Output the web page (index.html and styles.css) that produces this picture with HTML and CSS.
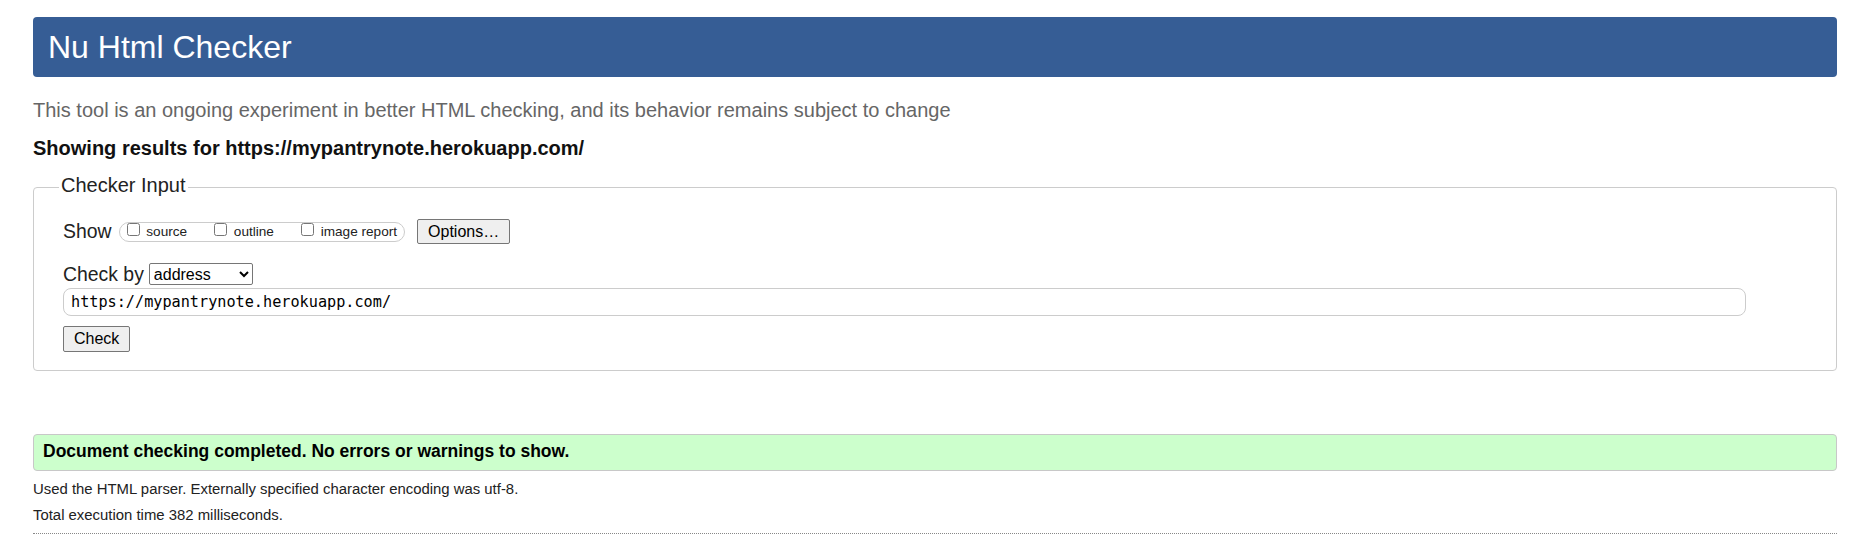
FILE: index.html
```html
<!DOCTYPE html>
<html lang="en">
<head>
<meta charset="utf-8">
<title>Showing results for https://mypantrynote.herokuapp.com/ - Nu Html Checker</title>
<link rel="stylesheet" href="styles.css">
</head>
<body>
<h1 class="title">Nu Html Checker</h1>
<p class="intro">This tool is an ongoing experiment in better HTML checking, and its behavior remains subject to change</p>
<p class="showing">Showing results for https://mypantrynote.herokuapp.com/</p>
<form class="checker">
<fieldset class="input-box">
<legend class="legend">Checker Input</legend>
<div class="row show-row">
<span class="row-label label-show">Show</span>
<span class="pill"><label class="opt"><input type="checkbox" class="cb"> source</label><label class="opt"><input type="checkbox" class="cb"> outline</label><label class="opt opt-last"><input type="checkbox" class="cb"> image report</label></span>
<button type="button" class="btn btn-options">Options…</button>
</div>
<div class="row by-row">
<span class="row-label">Check by</span>
<select class="by-select"><option>address</option></select>
</div>
<div class="url-row"><input class="url" type="url" value="https://mypantrynote.herokuapp.com/"></div>
<div class="submit-row"><button type="button" class="btn btn-check">Check</button></div>
</fieldset>
</form>
<p class="success">Document checking completed. No errors or warnings to show.</p>
<p class="details">Used the HTML parser. Externally specified character encoding was utf-8.</p>
<p class="details">Total execution time 382 milliseconds.</p>
<hr class="dots">
</body>
</html>
```

FILE: styles.css
```css
html, body {
  background: #ffffff;
}
body {
  margin: 0;
  padding: 17px 20px 0 33px;
  font-family: "Liberation Sans", Arial, sans-serif;
  color: #222222;
}
.title {
  margin: 0;
  height: 60px;
  line-height: 60px;
  padding: 0 15px;
  background: #365d95;
  color: #ffffff;
  font-size: 32px;
  font-weight: normal;
  border-radius: 4px;
}
.intro {
  margin: 21px 0 0;
  font-size: 20px;
  line-height: 24px;
  color: #666666;
}
.showing {
  margin: 15px 0 0;
  font-size: 20px;
  line-height: 22px;
  font-weight: bold;
  color: #111111;
}
.checker {
  margin: 0;
}
.input-box {
  margin: 16px 0 0;
  padding: 0 20px 18px 29px;
  border: 1px solid #cccccc;
  border-radius: 4px;
  min-width: 0;
}
.legend {
  font-size: 20px;
  line-height: 20px;
  padding: 0 2px 4px;
  margin-left: -4px;
  color: #222222;
}
.row {
  display: flex;
  align-items: center;
}
.show-row {
  margin-top: 20px;
  height: 25px;
}
.row-label {
  font-size: 19.4px;
  line-height: 22px;
}
.label-show {
  padding-bottom: 2px;
  margin-right: 7px;
}
.pill {
  display: inline-block;
  border: 1px solid #cccccc;
  border-radius: 10px;
  padding: 0 7px 1px 3px;
  font-size: 13.6px;
  line-height: 17px;
  white-space: nowrap;
}
.opt {
  margin-right: 23px;
}
.opt-last {
  margin-right: 0;
}
.cb {
  width: 13px;
  height: 13px;
  margin: 0 3px 3px 4px;
  vertical-align: baseline;
}
.btn {
  font-family: "Liberation Sans", Arial, sans-serif;
  font-size: 16px;
  color: #000000;
  background: #efefef;
  border: 1px solid #767676;
  border-radius: 2px;
  padding: 0 9px;
}
.btn-options {
  margin-left: 12px;
  height: 25px;
  padding: 0 10px;
}
.by-row {
  margin-top: 19px;
  height: 22px;
}
.by-row .row-label {
  margin-right: 5px;
}
.by-select {
  font-family: "Liberation Sans", Arial, sans-serif;
  font-size: 16px;
  width: 104px;
  height: 22px;
  color: #000000;
  border: 1px solid #767676;
  border-radius: 2px;
  background: #ffffff;
}
.url-row {
  margin-top: 3px;
}
.url {
  box-sizing: border-box;
  width: 96%;
  height: 28px;
  margin: 0;
  padding: 0 7px;
  border: 1px solid #cccccc;
  border-radius: 8px;
  font-family: "DejaVu Sans Mono", "Liberation Mono", monospace;
  font-size: 15.2px;
  color: #000000;
}
.submit-row {
  margin-top: 10px;
}
.btn-check {
  height: 26px;
  padding: 0 10px;
}
.success {
  margin: 63px 0 0;
  padding: 5px 9px 8px;
  line-height: 22px;
  font-size: 17.5px;
  font-weight: bold;
  color: #000000;
  background: #ccffcc;
  border: 1px solid #c8c8c8;
  border-radius: 4px;
}
.details {
  margin: 9px 0 0;
  font-size: 14.9px;
  line-height: 18px;
  color: #222222;
}
.details + .details {
  margin-top: 8px;
}
.dots {
  margin: 9px 0 0;
  height: 0;
  border: 0;
  border-top: 1px dotted #888888;
}
```
